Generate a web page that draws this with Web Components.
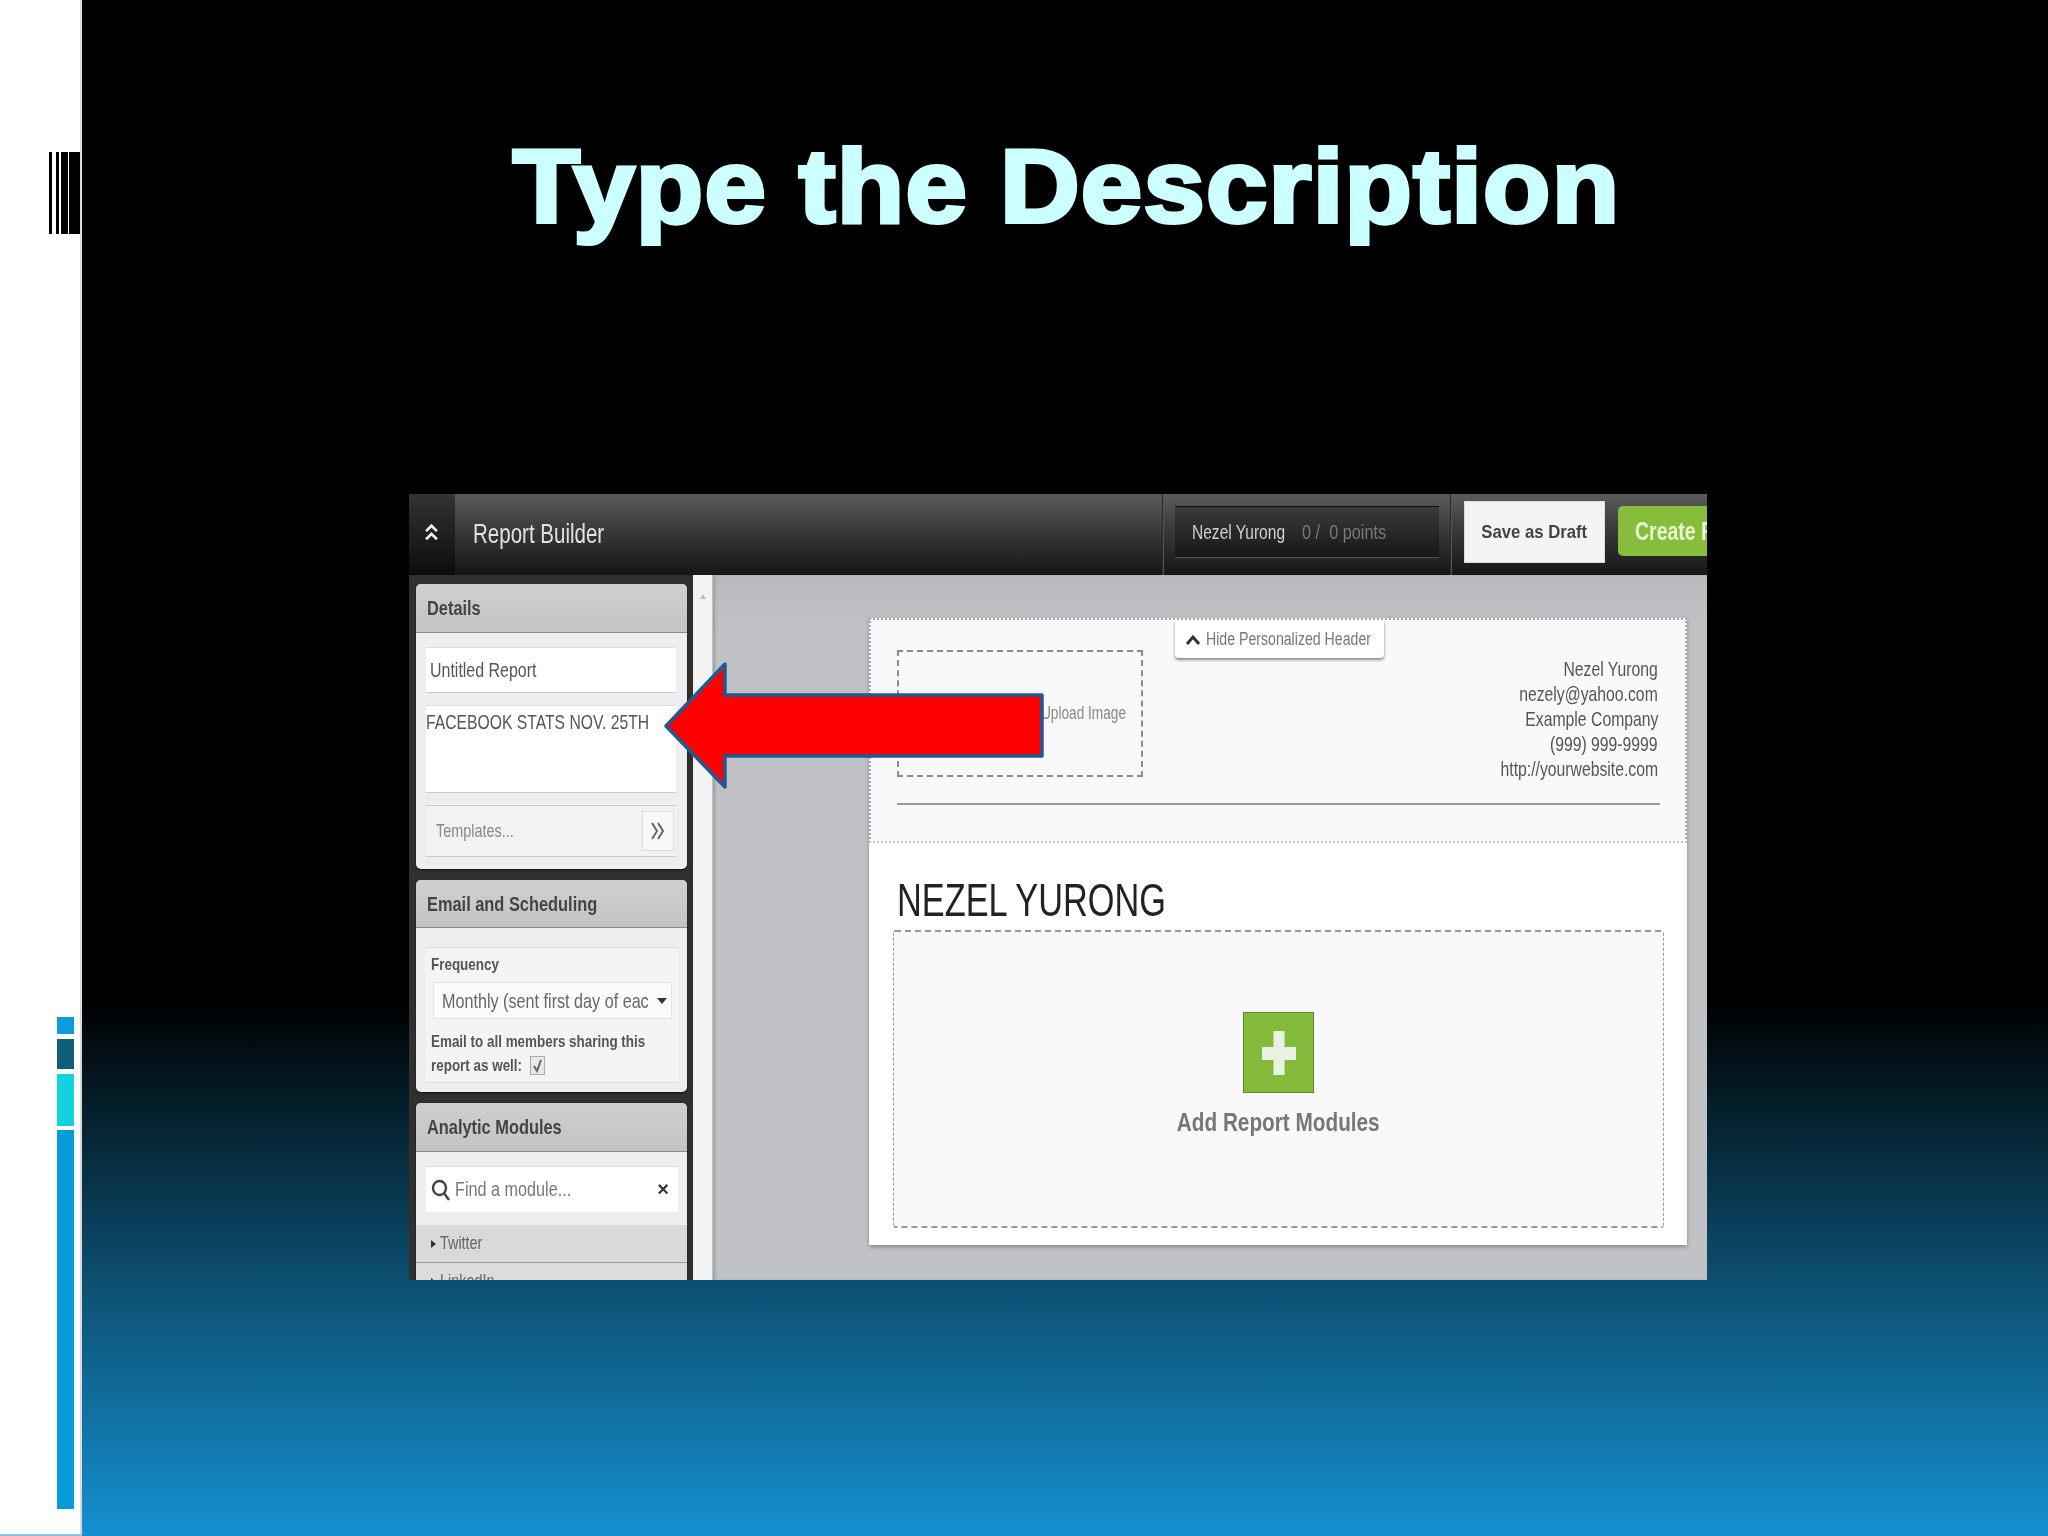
<!DOCTYPE html>
<html lang="en"><head><meta charset="utf-8"><title>Type the Description</title>
<style>html,body{margin:0;padding:0;background:#000}</style></head>
<body>
<slide-deck></slide-deck>
<script>
function def(name, html){
  customElements.define(name, class extends HTMLElement{
    constructor(){super();this.attachShadow({mode:'open'}).innerHTML=html;}
  });
}
const F='"Liberation Sans",Arial,sans-serif';

def('sq-t',`<style>:host{display:inline-block;white-space:nowrap;flex:none;transform:scaleX(var(--sx,.73));transform-origin:var(--o,left) center}</style><slot></slot>`);

def('slide-rail',`<style>
:host{display:flex;flex-direction:column;background:#fff;border-right:2px solid #d9d9d9;box-sizing:border-box;height:1536px;padding-top:152px}
.code{display:flex;height:82px;margin-left:49px;width:31px;flex:none}
.code i{display:block;background:#000;height:100%;flex:none}
.stack{display:flex;flex-direction:column;gap:4.500px;margin:783px 0 0 57px;width:17px;flex:none}
.stack i{display:block}
.end{margin-top:auto;height:2px;background:#8cc4e4;margin-right:-2px}
</style>
<div class="code"><i style="width:3px"></i><i style="width:3px;margin-left:4px"></i><i style="width:7px;margin-left:1.500px"></i><i style="width:11px;margin-left:1.500px"></i></div>
<div class="stack">
<i style="height:17px;background:#0e9ade"></i>
<i style="height:30.500px;background:#0e5f7c"></i>
<i style="height:52px;background:#12d3dc"></i>
<i style="height:379px;background:#069cd9"></i>
</div><div class="end"></div>`);

def('slide-title',`<style>
:host{display:block;height:494px;box-sizing:border-box;padding-top:122px;text-align:center;margin-left:3px}
h1{display:inline-block;margin:0;font:bold 103px/130px "Liberation Sans",Arial,sans-serif;color:#ccffff;letter-spacing:1.2px;-webkit-text-stroke:4px #ccffff;white-space:nowrap;transform:scaleX(1.07);transform-origin:center}
</style><h1>Type the Description</h1>`);

def('top-bar',`<style>
:host{display:flex;height:81px;align-items:stretch;background:linear-gradient(#5c5c5c 0,#3c3c3c 40%,#161616 100%);font-family:${F};position:relative}
.col{width:46px;flex:none;background:linear-gradient(#333,#0c0c0c);display:flex;align-items:center;justify-content:center;padding-bottom:5px;padding-right:2px;box-sizing:border-box}
.name{margin-left:18px;display:flex;align-items:center;flex:1;font-size:27px;color:#e2e2e2}
.name sq-t{--sx:.76}
.sep{width:1px;background:#2a2a2a;box-shadow:1px 0 0 #555;flex:none}
.user{margin:12px 11px 17px 12px;width:264px;background:linear-gradient(#3a3a3a,#171717);border-top:1px solid #111;border-bottom:1px solid #555;box-sizing:border-box;display:flex;align-items:center;padding-left:17px;font-size:21px;color:#d0d0d0;flex:none}
.user sq-t{--sx:.74}
.user .pts{color:#787878;margin-left:-15.500px;--sx:.775}
.draft{margin:7px 13px 12px 13px;width:141px;background:#f4f4f4;border:1px solid #ddd;box-sizing:border-box;display:flex;align-items:center;justify-content:center;font:bold 19px ${F};color:#444;flex:none}
.create{margin:12px 0 19px 0;width:89px;background:#86bd3b;border-radius:5px 0 0 5px;overflow:hidden;display:flex;align-items:center;padding-left:17px;box-sizing:border-box;font:bold 25px ${F};color:#e8f4d4;flex:none}
</style>
<div class="col"><svg width="17" height="18" viewBox="0 0 18 20" fill="none" stroke="#eee" stroke-width="3"><path d="M3 9l6-6 6 6M3 18l6-6 6 6"/></svg></div>
<div class="name"><sq-t>Report Builder</sq-t></div>
<div class="sep"></div>
<div class="user"><sq-t>Nezel Yurong</sq-t><sq-t class="pts">0 /&nbsp; 0 points</sq-t></div>
<div class="sep"></div>
<div class="draft"><sq-t style="--sx:.88;--o:center">Save as Draft</sq-t></div>
<div class="create"><sq-t style="--sx:.78">Create Report</sq-t></div>`);

def('side-panel',`<style>
:host{display:block;background:#eeeeee;border-radius:5px;overflow:hidden;flex:none;font-family:${F};box-shadow:0 1px 2px #111}
header{height:var(--hh,49px);background:linear-gradient(#cfcfcf,#c4c4c4);border-bottom:1px solid #8a8a8a;box-sizing:border-box;display:flex;align-items:center;padding-left:11px;font:bold 21px ${F};color:#444}
header ::slotted(*){--sx:.78}
</style><header><slot name="h"></slot></header><slot></slot>`);

def('details-body',`<style>
:host{display:flex;flex-direction:column;padding:15px 11px 12px 10px;font-family:${F}}
.in{height:44px;background:#fff;box-shadow:0 -1px 0 #ddd,0 1px 0 #ccc;display:flex;align-items:center;padding-left:4px;font-size:21px;color:#555}
.in sq-t{--sx:.76}
.ta{height:86px;box-sizing:border-box;margin-top:14px;background:#fff;box-shadow:0 -1px 0 #ddd,0 1px 0 #ccc;padding:4px 0 0;font-size:21px;line-height:24px;color:#555}
.ta sq-t{--sx:.748}
.tp{height:52px;box-sizing:border-box;margin-top:13px;border-top:1px solid #ccc;border-bottom:1px solid #ccc;background:#f2f2f2;display:flex;align-items:center;justify-content:space-between;padding:0 2px 0 10px;font-size:19px;color:#888}
.tp sq-t{--sx:.76}
.btn{width:32px;height:40px;background:#f8f8f8;border:1px solid #ddd;box-sizing:border-box;display:flex;align-items:center;justify-content:center}
</style>
<div class="in"><sq-t>Untitled Report</sq-t></div>
<div class="ta"><sq-t>FACEBOOK STATS NOV. 25TH</sq-t></div>
<div class="tp"><sq-t>Templates...</sq-t><div class="btn"><svg width="16" height="20" viewBox="0 0 16 20" fill="none" stroke="#666" stroke-width="2"><path d="M2 2l5 8-5 8M8 2l5 8-5 8"/></svg></div></div>`);

def('email-body',`<style>
:host{display:block;padding:19px 9px 9px 10px;font-family:${F}}
.box{height:136px;background:#f4f4f4;border-top:1px solid #ddd;border-bottom:1px solid #ddd;box-sizing:border-box;padding:5px 6px 0 5px;font:bold 17px/24px ${F};color:#555}
.box sq-t{--sx:.79}
.sel{height:37px;margin:5px 0 0 2px;background:#fbfbfb;border:1px solid #e4e4e4;box-sizing:border-box;display:flex;align-items:center;justify-content:space-between;padding:0 4px 0 8px;font:21px ${F};color:#666}
.sel sq-t{--sx:.77;margin-right:-70px}
.caret{width:0;height:0;border:5px solid transparent;border-top:6px solid #333;border-bottom:0;flex:none}
.l1{margin-top:11px}
.chk{display:inline-block;width:15px;height:19px;background:#e8e8e8;border:1px solid #aaa;box-sizing:border-box;vertical-align:-4px;margin-left:-16px;text-align:center}
</style>
<div class="box"><sq-t>Frequency</sq-t>
<div class="sel"><sq-t>Monthly (sent first day of eac</sq-t><span class="caret"></span></div>
<div class="l1"><sq-t>Email to all members sharing this</sq-t></div>
<div><sq-t>report as well:</sq-t><span class="chk"><svg width="11" height="15" viewBox="0 0 11 15" fill="none" stroke="#666" stroke-width="2" style="display:block;margin:1px auto"><path d="M2 8l3 5 4-11"/></svg></span></div>
</div>`);

def('modules-body',`<style>
:host{display:block;padding-top:15px;font-family:${F}}
.s{height:45px;margin:0 9px 0 10px;background:#fff;box-shadow:0 -1px 0 #ddd;display:flex;align-items:center;padding:0 9px 0 5px;font-size:20px;color:#777}
.s svg{flex:none;margin-right:4px}
.s sq-t{--sx:.81}
.x{margin-left:auto;font:bold 20px ${F};color:#333}
.row{height:38px;margin-top:0;background:#d9d9d9;border-bottom:1px solid #999;box-sizing:border-box;display:flex;align-items:center;padding-left:15px;font-size:18px;color:#666}
.row sq-t{--sx:.8}
.row i{width:0;height:0;border:4px solid transparent;border-left:5px solid #333;border-right:0;margin-right:4px;flex:none}
.g{height:13px}
</style>
<div class="s"><svg width="20" height="22" viewBox="0 0 20 22" fill="none" stroke="#444" stroke-width="2.400"><ellipse cx="8.500" cy="9" rx="6.500" ry="7"/><path d="M13 14l5 7"/></svg><sq-t>Find a module...</sq-t><span class="x">×</span></div>
<div class="g"></div>
<div class="row"><i></i><sq-t>Twitter</sq-t></div>
<div class="row" style="background:#dcdcdc"><i></i><sq-t>LinkedIn</sq-t></div>`);

def('side-bar',`<style>
:host{display:flex;flex-direction:column;gap:11px;width:284px;flex:none;box-sizing:border-box;padding:9px 6px 0 7px;background:#303030;height:705px;overflow:hidden}
</style>
<side-panel><sq-t slot="h">Details</sq-t><details-body></details-body></side-panel>
<side-panel style="--hh:48px"><sq-t slot="h">Email and Scheduling</sq-t><email-body></email-body></side-panel>
<side-panel><sq-t slot="h">Analytic Modules</sq-t><modules-body></modules-body></side-panel>`);

def('scroll-gutter',`<style>
:host{display:block;width:20px;flex:none;background:#f3f3f3;box-shadow:inset -1px 0 0 #c4c4c4;height:705px;text-align:center;padding-top:10px;box-sizing:border-box}
i{display:inline-block;width:0;height:0;border:3px solid transparent;border-bottom:5px solid #bbb;border-top:0}
</style><i></i>`);

def('report-paper',`<style>
:host{display:block;width:818px;height:627px;background:#fff;box-shadow:0 2px 4px #8a8a8a;font-family:${F};position:relative;flex:none}
.head{height:225px;background:#f9f9fb;box-sizing:border-box;border:2px dotted #aaa;border-bottom:2px dotted #c4c4c4;padding:30px 25px 0 26px;position:relative}
.row{display:flex;justify-content:space-between;align-items:flex-start}
.up{width:246px;height:127px;border:2px dashed #8c8c8c;box-sizing:border-box;display:flex;align-items:center;justify-content:flex-end;padding-right:15px;font-size:18px;color:#888}
.up sq-t{--o:right;--sx:.76}
.ct{text-align:right;font-size:21px;line-height:25px;color:#555;margin:6px 2px 0 0}
.ct sq-t{--sx:.75;--o:right}
.hr{height:2px;background:#9a9a9a;margin-top:22px}
.tab{position:absolute;left:304px;top:0;width:209px;height:38px;background:#fff;border-radius:0 0 4px 4px;box-shadow:0 2px 3px #888;display:flex;align-items:center;padding-left:10px;box-sizing:border-box;font-size:18px;color:#777}
.tab svg{margin-right:5px;flex:none}
.tab sq-t{--sx:.785}
h2{margin:0;font:400 46px/52px ${F};color:#222;padding:31px 0 0 28px;height:87px;box-sizing:border-box;white-space:nowrap}
h2 sq-t{--sx:.746}
.drop{margin-left:24px;width:771px;height:298px;border:2px dashed #999;border-left-width:1px;border-right-width:1px;box-sizing:border-box;background:#f9f9fb;border-radius:2px;display:flex;flex-direction:column;align-items:center;padding-top:80px}
.plus{width:71px;height:81px;background:#84ba3a;border:1px solid #5d8a26;box-sizing:border-box;display:flex;align-items:center;justify-content:center;flex:none}
.lbl{font:bold 25px/30px ${F};color:#777;margin-top:14px}
.lbl sq-t{--sx:.83;--o:center}
</style>
<div class="head">
<div class="row"><div class="up"><sq-t>Upload Image</sq-t></div>
<div class="ct">
<div><sq-t>Nezel Yurong</sq-t></div><div><sq-t>nezely@yahoo.com</sq-t></div><div><sq-t>Example Company</sq-t></div><div><sq-t>(999) 999-9999</sq-t></div><div><sq-t>http://yourwebsite.com</sq-t></div>
</div></div>
<div class="hr"></div>
<div class="tab"><svg width="16" height="11" viewBox="0 0 16 11" fill="none" stroke="#333" stroke-width="3"><path d="M2 10l6-7 6 7"/></svg><sq-t>Hide Personalized Header</sq-t></div>
</div>
<h2><sq-t>NEZEL YURONG</sq-t></h2>
<div class="drop"><div class="plus"><svg width="34" height="44" viewBox="0 0 34 44"><path fill="#e9f1e2" d="M11.500 0h11v16H34v13H22.500v15h-11V29H0V16h11.500z"/></svg></div>
<div class="lbl"><sq-t>Add Report Modules</sq-t></div></div>`);

def('callout-arrow',`<style>
:host{position:absolute;left:254px;top:167px;display:block;width:382px;height:126px;pointer-events:none}
svg{display:block}
</style>
<svg width="382" height="126" viewBox="663 661 382 126" style="overflow:visible"><path d="M666 726L725 664V695H1042V756H725V787Z" fill="#ff0000" stroke="#1c5a96" stroke-width="3.500" stroke-linejoin="round"/></svg>`);

def('app-shot',`<style>
:host{display:block;position:relative;width:1298px;height:786px;overflow:hidden;margin-left:327px;background:#bfc1c4}
.inner{filter:blur(.5px);height:786px}
.body{display:flex}
.main{flex:1;background:linear-gradient(#b7b9bb,#c0c2c6 8%,#c0c2c6);padding:43px 0 0 156px;height:705px;box-sizing:border-box;box-shadow:inset 3px 0 3px -1px #9b9da0}
</style>
<div class="inner"><top-bar></top-bar>
<div class="body"><side-bar></side-bar><scroll-gutter></scroll-gutter><div class="main"><report-paper></report-paper></div></div></div>
<callout-arrow></callout-arrow>`);

def('slide-deck',`<style>
:host{display:grid;grid-template-columns:82px 1fr;width:2048px;height:1536px;overflow:hidden}
.stage{background:linear-gradient(#000 0,#000 1000px,#0c4f70 1280px,#1490d0 1536px);height:1536px}
</style>
<slide-rail></slide-rail>
<div class="stage"><slide-title></slide-title><app-shot></app-shot></div>`);
</script>
</body></html>
